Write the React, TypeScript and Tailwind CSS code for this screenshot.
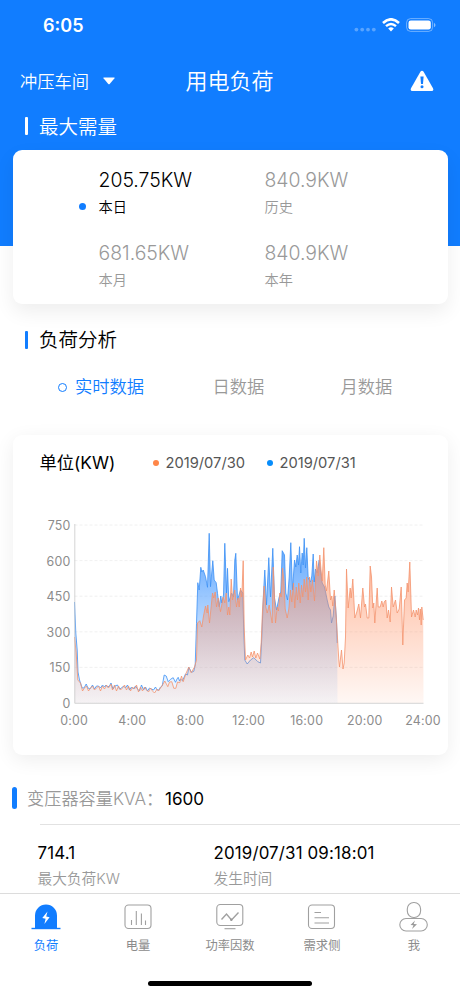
import React, { useState } from "react";

const BLUE_LINE =
  "0,77 1.3,108 2.7,125 3.5,147 5,155 7.7,163 9.5,163 11.7,159 13.5,163 15.5,164 18,160 20,164 22,161 24,161 26,163 28,160 30,162 31.5,160 33,162 35,161 36.5,158 38.5,164 40.5,161 43,160 45,164 47,163 49,161 51,163 53,160 55,165 57,162 59,164 61,161 63,164 65,166 67,160 69,165 71,162 73,166 75,163 77,164 79,165 81,162 82.5,165 84.3,165 86,162 87.7,161 89.7,150 91.7,151 93.7,156.7 96,154.3 98.7,152.7 101,157.3 102.5,154 103.7,152.3 105,156 106,154 108,155.7 111,149 113,150 114.3,142.3 117,147.3 119.3,146.3 120.7,140 122,98.3 123.3,57.7 124.7,65 126.3,42.3 127.3,47 128.7,45 131,51.7 133,62.3 134.7,8.3 136,61.7 138.3,35.7 139.7,55 141.7,57.7 143,68.3 144.7,81.7 146.3,71 147.3,78 149,70 150.3,18.3 152,68 153,43.3 154.3,76.7 157,68 159,72 160.3,35 161.3,28.3 163,75 166,65 168.3,68 169.3,108 170.3,135 172.7,139 176,135 179.3,132.7 183.3,136.7 186,138 187.3,112 189,68 190.3,45 192,80 194.3,32.7 196,72 198.3,23.3 200,73 202,85 204.7,72 206.3,67 207.7,25.7 210,30 211.3,68 213,75 214.7,52 216.3,17.7 218,65 220,35 221.3,42 222.7,30 224,40 225,21.7 226.3,48 227.7,28 228.7,40 229.7,13.3 231,43 232.3,22.7 233.7,53 236,57 237.3,51 238.7,29 239.7,57 241,44 242.7,48 244.7,35 247.7,58 250,62 252.7,75 254.3,82 256,85 257,98 258.7,91 260.3,71 262,95 262.7,118";

const ORANGE_LINE =
  "0,112 1.7,128 3.3,155 6,158 8,166 10,163 12,161 14,166 16,163 18,161 20,165 22,163 24,161 26,166 28,161 30,164 32,160 34,163 36.5,159 38,165 40,160 42,166 44,161 46,165 48,163 50,160 52,165 54,161 56,166 58,162 60,164 62,160 64,167 66,162 68,166 70,162 72,165 74,167 76,163 78,166 80,168 82.7,164 84,166 86,163 88,160 90.3,156 93.3,161.7 95,157 97.3,156.7 99.3,163.3 101.3,163.3 103,157 105.3,157.7 107,151 108.7,156.7 111.7,148 114.3,142 116.7,147.7 120,142 122,135 123,98 125.3,95.7 127.3,102 129,91 131,81 132.7,88 133.3,80 135,98 138,68 139.3,73 140.7,67 142,82 143.7,73 146,86.7 148.7,72 150.3,78 151.7,68 153,90 154.3,82 155.3,90 156.7,54 158,75 160.3,65 162,82 163.5,73 164.7,82 166,63 167.3,72 168.7,35.7 169.7,102 171,135 173.3,130 175,133 176.7,127 178,132 179.7,126 181.3,133 183,128 185.3,134 186.7,118 188,85 189.7,61 191.3,82 192.7,88 194.7,80 196.3,90 197.7,98 198.7,42 200,72 201,98 202.7,82 204,86 205.3,68 206.7,72 208,43 209.3,55 210.7,84 212.7,93 214.3,84 216,65 217.3,77 219,58 220.3,83 221.7,62 223,75 224.3,58 225.7,78 227,60 228.3,72 229.7,54 231,67 232.3,52 233.7,75 235,52 236.3,67 238,55 240,76 242,36 243.7,51 245.3,30 246.7,47 247.7,56 249.3,22.7 250.7,60 252,66 254.3,46 256,75 257.3,71 258.3,81 259.7,65 261,80 262.5,105 264.3,135 265,142 267,125 268.5,144 269.7,138 271,112 272,44 273.7,83 275.7,63 276.7,73 278.3,54 280.3,93 282.3,87 284.3,79 286,93 288.3,63 290,82 291,79 292.7,93 294.3,93 295.7,41 297,52 298.3,83 299.3,78 300.3,98 302.7,63 303.7,82 305.7,82 307.3,76 308.7,82 309.7,77 311.3,75 312.7,93 314,85 315.7,97 317,62 318.7,82 321,75 322.7,88 324.7,84 326.7,62 328.3,120 330,75 331.7,73 332.7,58 333.7,67 335.3,37 337,92 339,85 340.7,92 341.7,85 343,90 344,83 345,95 345.8,84 346.7,100 347.3,82 348.7,95";

const stats = [
  { value: "205.75KW", label: "本日" },
  { value: "840.9KW", label: "历史" },
  { value: "681.65KW", label: "本月" },
  { value: "840.9KW", label: "本年" },
];

function StatusBar() {
  return (
    <div className="flex h-[50px] items-center justify-between pl-[43px] pr-[24px]">
      <span className="text-[18px] font-semibold">6:05</span>
      <div className="flex items-center gap-[6px]">
        <svg width="22" height="18" viewBox="0 0 22 18" fill="#fff" opacity="0.3">
          <circle cx="2.4" cy="13.6" r="1.9" />
          <circle cx="8.2" cy="13.6" r="1.9" />
          <circle cx="14" cy="13.6" r="1.9" />
          <circle cx="19.8" cy="13.6" r="1.9" />
        </svg>
        <svg width="18" height="14" viewBox="0 0 18 14" fill="none" stroke="#fff">
          <path d="M1 5Q9 -2.4 17 5" strokeWidth="2.6" />
          <path d="M4 8.2Q9 3.6 14 8.2" strokeWidth="2.4" />
          <path d="M6.2 10.6Q9 8 11.8 10.6L9 13.6Z" fill="#fff" stroke="none" />
        </svg>
        <svg width="30" height="14" viewBox="0 0 30 14">
          <rect x="0.6" y="0.6" width="26" height="12.8" rx="4" fill="none" stroke="#fff" strokeOpacity="0.4" />
          <rect x="2.5" y="2.4" width="22.3" height="9.2" rx="2.3" fill="#fff" />
          <path d="M28 4.7q3 2.3 0 4.6z" fill="#fff" fillOpacity="0.5" />
        </svg>
      </div>
    </div>
  );
}

function Header() {
  return (
    <header className="h-[246px] shrink-0 bg-[#117dff] text-white">
      <StatusBar />
      <div className="grid h-[63px] grid-cols-3 items-center pl-[20px] pr-[26px]">
        <div className="flex items-center gap-[14px]">
          <span className="text-[17.3px] font-[350]">冲压车间</span>
          <svg className="-mt-[1px]" width="12" height="8" viewBox="0 0 12 8" fill="#fff">
            <path d="M.8 .5H11.2Q12 .5 11.5 1.2L6.7 7Q6 7.7 5.3 7L.5 1.2Q0 .5 .8 .5Z" />
          </svg>
        </div>
        <h1 className="pl-[5px] text-center text-[22px] font-[350]">用电负荷</h1>
        <svg className="-mt-[1px] justify-self-end" width="24" height="22" viewBox="0 0 24 22">
          <path d="M10.4 1.7Q12 -.4 13.6 1.7L23 18.3Q24 21 21.6 21H2.4Q0 21 1 18.3Z" fill="#fff" />
          <path d="M10.4 6.5h3.2l-.6 7.5h-2z" fill="#117dff" />
          <circle cx="12" cy="16.7" r="1.5" fill="#117dff" />
        </svg>
      </div>
      <div className="flex h-[28px] items-center gap-[11px] pl-[25px]">
        <i className="-mt-[2px] h-[18px] w-[3px] rounded-[1px] bg-white" />
        <h2 className="pt-[1px] text-[19.5px] font-[350]">最大需量</h2>
      </div>
    </header>
  );
}

function DemandCard() {
  const [active, setActive] = useState(0);
  return (
    <section className="relative mx-[12.5px] -mt-[96px] grid h-[154px] shrink-0 grid-cols-[166px_1fr] grid-rows-[73.5px_1fr] rounded-[9px] bg-white pl-[86px] pt-[16.5px] shadow-[0_8px_20px_rgba(0,0,0,0.07)]">
      {stats.map((s, i) => (
        <button
          key={s.label}
          onClick={() => setActive(i)}
          className={`relative flex flex-col items-start ${active === i ? "text-black" : "text-[#999]"}`}
        >
          <span className="h-[26px] text-[19.4px] font-[360] leading-[26px]">{s.value}</span>
          <span className="h-[26px] text-[14.2px] font-[350] leading-[27px]">{s.label}</span>
          {active === i && (
            <i className="absolute -left-[20px] top-[36px] h-[7.5px] w-[7.5px] rounded-full bg-[#117dff]" />
          )}
        </button>
      ))}
    </section>
  );
}

function Tabs() {
  const [tab, setTab] = useState(0);
  return (
    <div className="flex h-[81px] shrink-0 pl-[58px] pt-[20px] text-[17.3px] font-[350]">
      {["实时数据", "日数据", "月数据"].map((name, i) => (
        <button
          key={name}
          onClick={() => setTab(i)}
          className={`flex h-[26px] shrink-0 items-center gap-[8px] ${i === 0 ? "w-[154.5px]" : "w-[128px]"} ${
            tab === i ? "text-[#117dff]" : "text-[#999]"
          }`}
        >
          {tab === i && <i className="h-[9px] w-[9px] rounded-full border-[1.3px] border-[#117dff]" />}
          {name}
        </button>
      ))}
    </div>
  );
}

function LoadChart() {
  return (
    <svg
      className="mt-[33px]"
      width="435"
      height="235"
      viewBox="-61.5 -15 435 235"
      fontFamily="Inter, sans-serif"
      fontSize="12.4"
      letterSpacing="0.2"
      fill="#8c8c8c"
    >
      <defs>
        <linearGradient id="blueFill" x1="0" y1="0" x2="0" y2="178" gradientUnits="userSpaceOnUse">
          <stop offset="0" stopColor="#2f89f8" stopOpacity="0.85" />
          <stop offset="0.35" stopColor="#4b9cff" stopOpacity="0.62" />
          <stop offset="1" stopColor="#9cc8ff" stopOpacity="0.1" />
        </linearGradient>
        <linearGradient id="orangeFill" x1="0" y1="22" x2="0" y2="178" gradientUnits="userSpaceOnUse">
          <stop offset="0" stopColor="#ff9468" stopOpacity="0.68" />
          <stop offset="1" stopColor="#ff9468" stopOpacity="0.07" />
        </linearGradient>
      </defs>
      {[750, 600, 450, 300, 150, 0].map((v, i) => (
        <g key={v}>
          {v > 0 && <path d={`M0 ${i * 35.6}H349`} stroke="#ececec" strokeWidth="0.8" strokeDasharray="3 2" />}
          <text x="-4" y={i * 35.6 + 5} textAnchor="end">
            {v}
          </text>
        </g>
      ))}
      <polygon points={`0,178 ${BLUE_LINE} 263,178`} fill="url(#blueFill)" />
      <polyline points={BLUE_LINE} fill="none" stroke="#3c91f5" strokeWidth="0.8" />
      <polygon points={`0,178 ${ORANGE_LINE} 349,178`} fill="url(#orangeFill)" />
      <polyline points={ORANGE_LINE} fill="none" stroke="#f4936d" strokeWidth="0.8" />
      <path d="M.3 -1V178.3H349" fill="none" stroke="#c9c9c9" strokeWidth="0.8" />
      {["0:00", "4:00", "8:00", "12:00", "16:00", "20:00", "24:00"].map((t, i) => (
        <text key={t} x={i * 58.15 - 0.4} y="200" textAnchor="middle">
          {t}
        </text>
      ))}
    </svg>
  );
}

function AnalysisCard() {
  return (
    <section className="mx-[12.5px] h-[320px] shrink-0 rounded-[9px] bg-white pt-[14px] shadow-[0_5px_20px_rgba(0,0,0,0.07)]">
      <div className="flex h-[28px] items-center pl-[27px]">
        <h3 className="w-[113px] text-[17.3px] font-[370]">单位(KW)</h3>
        <i className="mr-[7px] h-[6px] w-[6px] rounded-full bg-[#ff8648]" />
        <span className="w-[101px] text-[14.7px] text-[#555]">2019/07/30</span>
        <i className="mr-[7px] h-[6px] w-[6px] rounded-full bg-[#078dfb]" />
        <span className="text-[14.7px] text-[#555]">2019/07/31</span>
      </div>
      <LoadChart />
    </section>
  );
}

function Transformer() {
  return (
    <section className="min-h-0 flex-1 overflow-hidden pt-[31px]">
      <div className="flex h-[24px] items-center pl-[12px]">
        <i className="mr-[10px] h-[22px] w-[5px] rounded-full bg-[#117dff]" />
        <span className="w-[138px] whitespace-nowrap pt-[1px] text-[17.2px] font-[350] text-[#999]">变压器容量KVA：</span>
        <span className="pt-[1px] text-[17.1px]">1600</span>
      </div>
      <div className="ml-[40px] mt-[14px] border-t border-[#e2e2e2]" />
      <div className="grid grid-cols-[176px_1fr] pl-[37.5px] pt-[15px]">
        <div>
          <p className="text-[16.9px] leading-[26px] tracking-[0.15px]">714.1</p>
          <p className="text-[14.7px] font-[350] leading-[26px] text-[#999]">最大负荷KW</p>
        </div>
        <div>
          <p className="text-[16.9px] leading-[26px] tracking-[0.15px]">2019/07/31 09:18:01</p>
          <p className="text-[14.7px] font-[350] leading-[26px] text-[#999]">发生时间</p>
        </div>
      </div>
    </section>
  );
}

const tabs = [
  {
    name: "负荷",
    icon: (
      <>
        <path d="M4 26V13.5a11 11 0 0 1 22 0V26z" fill="#117dff" stroke="none" />
        <path d="M.5 26.5h29" strokeWidth="1.4" />
        <path d="M16.5 9.5l-5.2 6.4 3.3.8-1.2 5.2 5.2-6.6-3.4-.7z" fill="#fff" stroke="none" />
      </>
    ),
  },
  {
    name: "电量",
    icon: (
      <>
        <rect x="2" y="3" width="26" height="23.5" rx="3.5" />
        <path d="M8.5 18v5M13.3 9v14M18.4 11.5V23M22.5 18.5V23" />
      </>
    ),
  },
  {
    name: "功率因数",
    icon: (
      <>
        <rect x="1.8" y="2.5" width="26" height="21" rx="3.5" />
        <path d="M6.5 17.5l5-5.5 5 6 7-7.5" strokeWidth="1.4" />
        <path d="M9.5 26.7h11" />
        <circle cx="16.3" cy="17.8" r="1.2" fill="#999" stroke="none" />
      </>
    ),
  },
  {
    name: "需求侧",
    icon: (
      <>
        <rect x="1.5" y="3" width="26" height="23.5" rx="3.5" />
        <path d="M7.5 10.5H14M7.5 15.8H22M7.5 21H22" />
      </>
    ),
  },
  {
    name: "我",
    icon: (
      <>
        <rect x="8.3" y=".5" width="13.3" height="15" rx="6.4" />
        <rect x=".8" y="16.5" width="27.5" height="12.5" rx="6.2" />
        <path d="M16 18.5l-4.5 4.4 3 .3-1.5 3.8 5-4.8-3.3-.3z" fill="#999" stroke="none" />
      </>
    ),
  },
];

function TabBar() {
  const [current, setCurrent] = useState(0);
  return (
    <nav className="flex h-[103px] shrink-0 flex-col items-center border-t border-[#dcdcdc] bg-white">
      <div className="grid w-full grid-cols-5 pt-[8px]">
        {tabs.map((t, i) => (
          <button
            key={t.name}
            onClick={() => setCurrent(i)}
            className={`flex flex-col items-center text-[12.3px] leading-[18px] ${
              current === i ? "text-[#117dff]" : "text-[#8c8c8c]"
            }`}
          >
            <svg
              width="30"
              height="30"
              viewBox="0 0 30 30"
              fill="none"
              stroke={current === i ? "#117dff" : "#a0a0a0"}
              strokeWidth="1.1"
              overflow="visible"
            >
              {t.icon}
            </svg>
            <span className="mt-[5px]">{t.name}</span>
          </button>
        ))}
      </div>
      <div className="mt-[26px] h-[5px] w-[164px] rounded-full bg-black" />
    </nav>
  );
}

export default function App() {
  return (
    <main className="flex h-[996px] w-[460px] flex-col overflow-hidden bg-white font-['Inter','Noto_Sans_CJK_SC',sans-serif] text-black">
      <Header />
      <DemandCard />
      <div className="mt-[23px] flex h-[27px] shrink-0 items-center gap-[11px] pl-[25px]">
        <i className="-mt-[2px] h-[18px] w-[3px] rounded-[1px] bg-[#117dff]" />
        <h2 className="text-[19.5px] font-[350]">负荷分析</h2>
      </div>
      <Tabs />
      <AnalysisCard />
      <Transformer />
      <TabBar />
    </main>
  );
}
